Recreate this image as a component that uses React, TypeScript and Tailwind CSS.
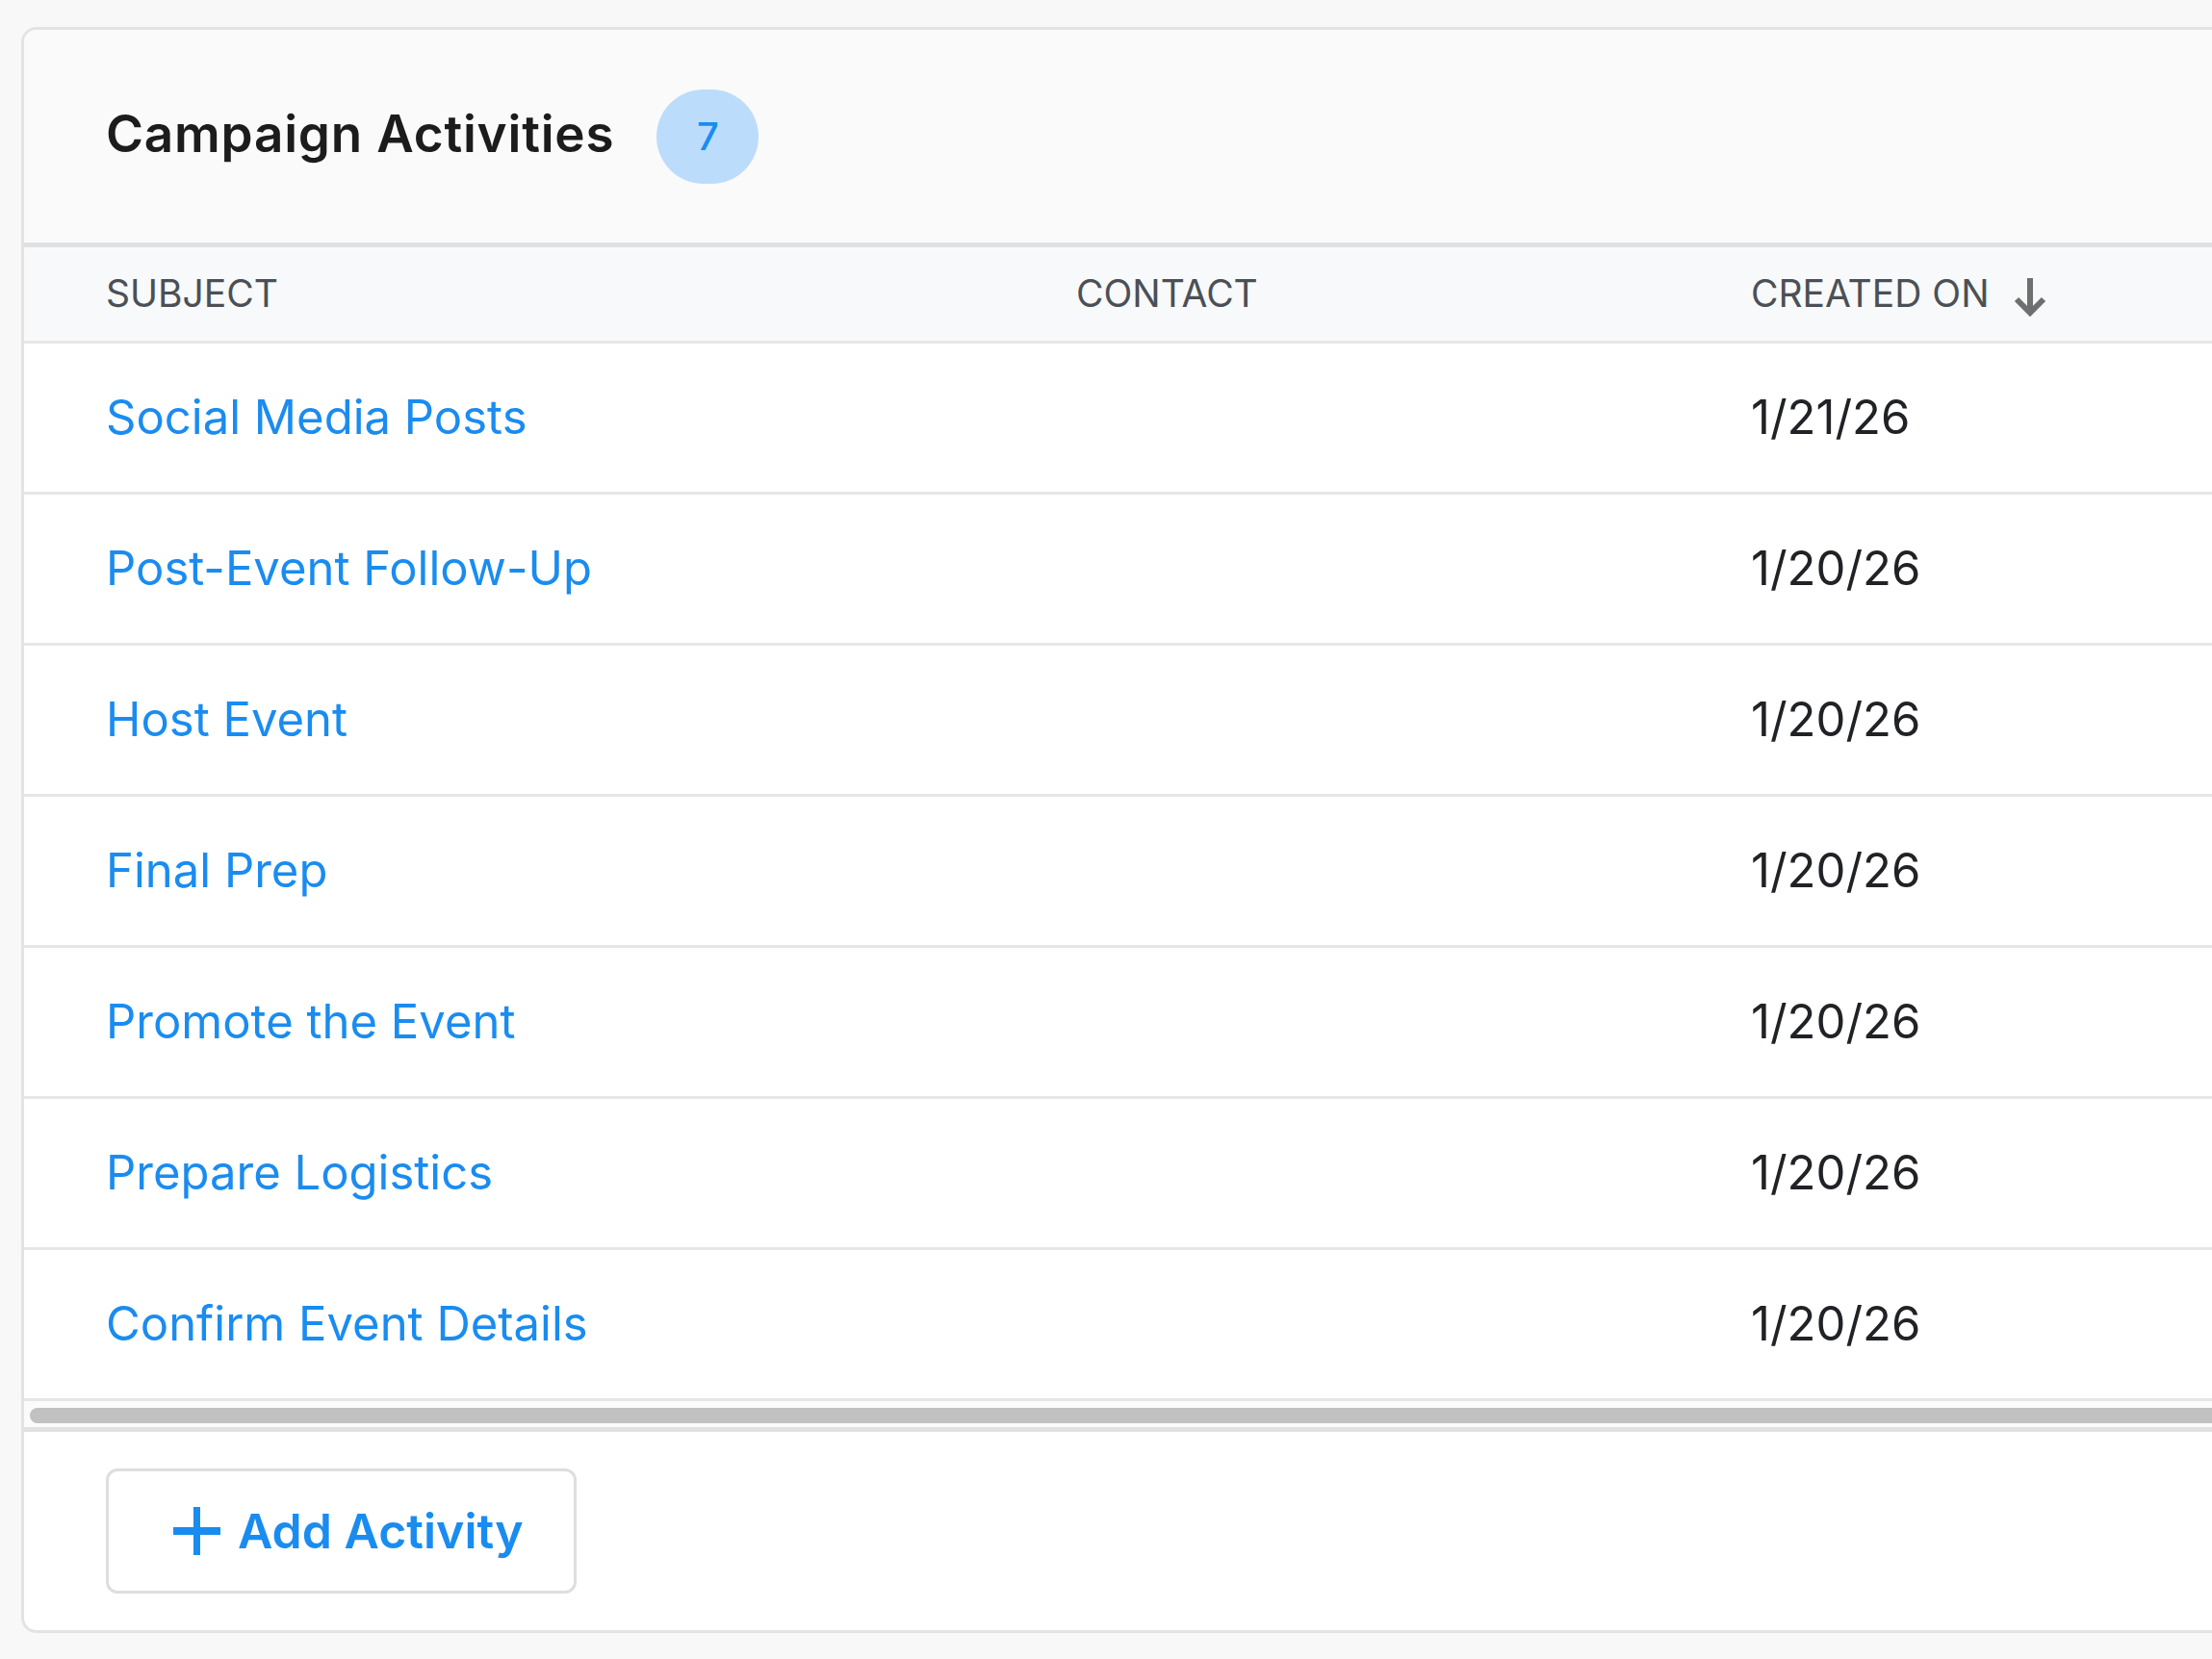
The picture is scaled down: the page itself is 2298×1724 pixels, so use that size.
import React from 'react';

const activities = [
  { subject: 'Social Media Posts', contact: '', createdOn: '1/21/26' },
  { subject: 'Post-Event Follow-Up', contact: '', createdOn: '1/20/26' },
  { subject: 'Host Event', contact: '', createdOn: '1/20/26' },
  { subject: 'Final Prep', contact: '', createdOn: '1/20/26' },
  { subject: 'Promote the Event', contact: '', createdOn: '1/20/26' },
  { subject: 'Prepare Logistics', contact: '', createdOn: '1/20/26' },
  { subject: 'Confirm Event Details', contact: '', createdOn: '1/20/26' },
];

function SortArrow() {
  return (
    <svg width="36" height="42" viewBox="0 0 36 42" fill="none" stroke="#6f6f6f" strokeWidth="6" className="ml-[24px] mt-[4px]">
      <path d="M18 2v36" />
      <path d="M4 24l14 14 14-14" strokeLinejoin="miter" />
    </svg>
  );
}

function PlusIcon() {
  return (
    <svg width="49" height="50" viewBox="0 0 49 50" fill="#1a8cf0">
      <rect x="21" y="0" width="7" height="50" />
      <rect x="0" y="21" width="49" height="8" />
    </svg>
  );
}

export default function App() {
  return (
    <div className="h-screen w-full overflow-hidden bg-[#f8f8f8] pl-[22px] pt-[28px] font-['Inter',sans-serif]">
      <div className="w-[2360px] overflow-hidden rounded-[16px] border-[3px] border-[#e3e3e3] bg-white">
        {/* header */}
        <div className="flex h-[226px] items-center gap-[44px] border-b-[5px] border-[#e1e1e1] bg-[#fafafa] pl-[85px]">
          <h2 className="pb-[4px] text-[53px] font-semibold tracking-[0.015em] text-[#1c1c1c]">Campaign Activities</h2>
          <span className="flex h-[98px] w-[106px] items-center justify-center rounded-full bg-[#bcdcfb] text-[40px] font-medium text-[#1a8cf0]">
            7
          </span>
        </div>

        {/* column headers */}
        <div className="flex h-[100px] items-center border-b-[3px] border-[#e6e6e6] bg-[#f8f9fa] pl-[85px] text-[39px] text-[#4b5056]">
          <div className="w-[1008px]">SUBJECT</div>
          <div className="w-[701px]">CONTACT</div>
          <div className="flex items-center">
            CREATED ON
            <SortArrow />
          </div>
        </div>

        {/* rows */}
        {activities.map((a) => (
          <div key={a.subject} className="flex h-[157px] items-center border-b-[3px] border-[#e6e6e6] pl-[85px] text-[49px]">
            <div className="w-[1008px] text-[#1a8cf0]">{a.subject}</div>
            <div className="w-[701px] text-[#222]">{a.contact}</div>
            <div className="text-[#202225]">{a.createdOn}</div>
          </div>
        ))}

        {/* horizontal scrollbar */}
        <div className="h-[27px] bg-[#fbfbfb] pl-[6px] pt-[7px]">
          <div className="h-[16px] rounded-full bg-[#c1c1c1]" />
        </div>

        {/* footer */}
        <div className="border-t-[5px] border-[#e2e2e2] pb-[38px] pl-[85px] pt-[38px]">
          <button className="flex h-[130px] w-[489px] items-center gap-[18px] rounded-[12px] border-[3px] border-[#dedede] bg-white pl-[67px] text-[50px] font-semibold text-[#1a8cf0]">
            <PlusIcon />
            Add Activity
          </button>
        </div>
      </div>
    </div>
  );
}
